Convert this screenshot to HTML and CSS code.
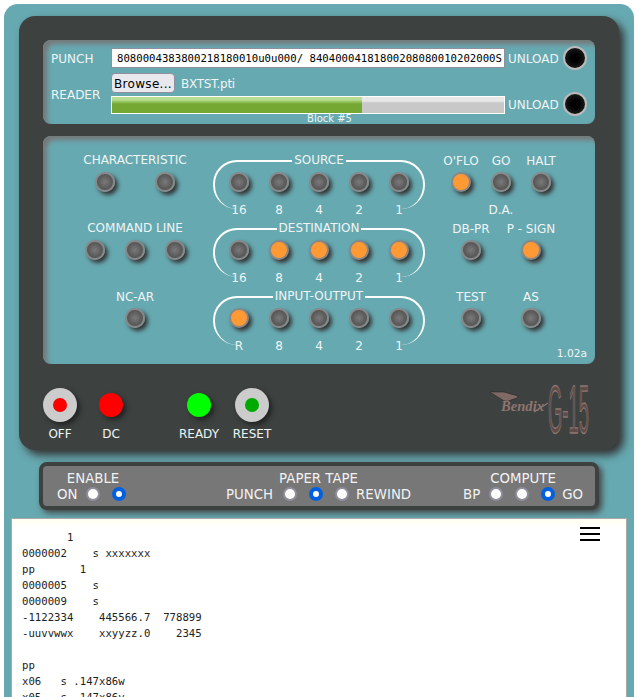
FILE: index.html
```html
<!DOCTYPE html>
<html lang="en">
<head>
    <meta charset="UTF-8">
    <title>Bendix G-15</title>
    <link rel="stylesheet" href="styles.css">
</head>
<body>
    <div class="cabinet">
        <div class="console">
            <div class="panel tape-panel">
                <div class="tape-row">
                    <span class="tape-label punch-label">PUNCH</span>
                    <div class="punch-box">8080004383800218180010u0u000/ 84040004181800208080010202000S</div>
                    <div class="unload"><span>UNLOAD</span><span class="unload-btn"></span></div>
                </div>
                <div class="tape-row reader-row">
                    <span class="tape-label reader-label">READER</span>
                    <div class="reader-mid">
                        <div class="file-row"><button class="browse">Browse...</button><span>BXTST.pti</span></div>
                        <div class="progress"><div class="progress-fill" style="width: 63.8%"></div></div>
                        <div class="block-label">Block #5</div>
                    </div>
                    <div class="unload unload-low"><span>UNLOAD</span><span class="unload-btn"></span></div>
                </div>
            </div>

            <div class="panel lamp-panel">
                <div class="col-left">
                    <div class="group">
                        <div class="title">CHARACTERISTIC</div>
                        <div class="lamps wide"><i class="lamp"></i><i class="lamp"></i></div>
                    </div>
                    <div class="group">
                        <div class="title">COMMAND LINE</div>
                        <div class="lamps"><i class="lamp"></i><i class="lamp"></i><i class="lamp"></i></div>
                    </div>
                    <div class="group">
                        <div class="title title-low">NC-AR</div>
                        <div class="lamps lamps-low"><i class="lamp"></i></div>
                    </div>
                </div>

                <div class="col-mid">
                    <div class="bank">
                        <div class="bank-title">SOURCE</div>
                        <div class="lamps"><i class="lamp"></i><i class="lamp"></i><i class="lamp"></i><i class="lamp"></i><i class="lamp"></i></div>
                        <div class="digits"><span>16</span><span>8</span><span>4</span><span>2</span><span>1</span></div>
                    </div>
                    <div class="bank">
                        <div class="bank-title">DESTINATION</div>
                        <div class="lamps"><i class="lamp"></i><i class="lamp on"></i><i class="lamp on"></i><i class="lamp on"></i><i class="lamp on"></i></div>
                        <div class="digits"><span>16</span><span>8</span><span>4</span><span>2</span><span>1</span></div>
                    </div>
                    <div class="bank">
                        <div class="bank-title">INPUT-OUTPUT</div>
                        <div class="lamps"><i class="lamp on"></i><i class="lamp"></i><i class="lamp"></i><i class="lamp"></i><i class="lamp"></i></div>
                        <div class="digits"><span>R</span><span>8</span><span>4</span><span>2</span><span>1</span></div>
                    </div>
                </div>

                <div class="col-right">
                    <div class="group">
                        <div class="cells">
                            <div class="cell"><div class="title">O'FLO</div><i class="lamp on"></i></div>
                            <div class="cell"><div class="title">GO</div><i class="lamp"></i></div>
                            <div class="cell"><div class="title">HALT</div><i class="lamp"></i></div>
                        </div>
                        <div class="da">D.A.</div>
                    </div>
                    <div class="group">
                        <div class="cells wide-cells">
                            <div class="cell"><div class="title">DB-PR</div><i class="lamp"></i></div>
                            <div class="cell"><div class="title">P - SIGN</div><i class="lamp on"></i></div>
                        </div>
                    </div>
                    <div class="group">
                        <div class="cells wide-cells">
                            <div class="cell"><div class="title">TEST</div><i class="lamp"></i></div>
                            <div class="cell"><div class="title">AS</div><i class="lamp"></i></div>
                        </div>
                    </div>
                </div>
                <div class="version">1.02a</div>
            </div>

            <div class="power-row">
                <div class="power off-cell"><span class="push"><i class="dot red"></i></span><div>OFF</div></div>
                <div class="power dc-cell"><span class="big-light red"></span><div>DC</div></div>
                <div class="power ready-cell"><span class="big-light green"></span><div>READY</div></div>
                <div class="power reset-cell"><span class="push"><i class="dot dark-green"></i></span><div>RESET</div></div>
                <svg class="logo" width="120" height="70" viewBox="0 0 120 70">
                    <path d="M10 17 Q10 18 13 19 L21 24 Q26 28 31 25 L37 23 L38 21 L24 17 Z" fill="#806a65" stroke="#262624" stroke-width="0.6"/>
                    <text x="21" y="36" class="logo-script" fill="#8d7570" textLength="43" lengthAdjust="spacingAndGlyphs">Bendix</text>
                    <path d="M54 37 L68 28" stroke="#8d7570" stroke-width="1.3" fill="none"/>
                    <text class="logo-big" transform="translate(68 58) scale(0.92 3.4)">G-15</text>
                </svg>
            </div>
        </div>

        <div class="switch-bar">
            <div class="switch-group enable">
                <div class="switch-title">ENABLE</div>
                <div class="switch-row"><span>ON</span><input type="radio" name="enable"><input type="radio" name="enable" checked></div>
            </div>
            <div class="switch-group tape">
                <div class="switch-title">PAPER TAPE</div>
                <div class="switch-row"><span>PUNCH</span><input type="radio" name="tape"><input type="radio" name="tape" checked><input type="radio" name="tape"><span class="after">REWIND</span></div>
            </div>
            <div class="switch-group compute">
                <div class="switch-title">COMPUTE</div>
                <div class="switch-row"><span>BP</span><input type="radio" name="compute"><input type="radio" name="compute"><input type="radio" name="compute" checked><span class="after">GO</span></div>
            </div>
        </div>

        <div class="paper">
            <div class="menu-icon"><i></i><i></i><i></i></div>
            <pre class="paper-text">       1
0000002    s xxxxxxx
pp       1
0000005    s
0000009    s
-1122334    445566.7  778899
-uuvvwwx    xxyyzz.0    2345

pp
x06   s .147x86w
x05   s .147x86v</pre>
        </div>
    </div>
</body>
</html>
```

FILE: styles.css
```css
html, body {
    margin: 0;
    height: 697px;
    overflow: hidden;
    background: #fff;
}
body {
    padding: 4px 4px 0;
    box-sizing: border-box;
    font-family: "DejaVu Sans", sans-serif;
    font-size: 12px;
    color: #eef5f5;
}
.cabinet {
    width: 630px;
    height: 720px;
    box-sizing: border-box;
    padding: 12px 15px;
    background: #67a9b1;
    border-radius: 14px;
}
.console {
    width: 600px;
    height: 434px;
    box-sizing: border-box;
    padding: 24px 24px 0;
    background: #3d4240;
    border-radius: 16px;
    box-shadow: 5px 5px 9px #333;
}
.panel {
    position: relative;
    background: #67a9b1;
    border-radius: 8px;
    box-shadow: inset 4px 4px 5px #777;
}

/* tape panel */
.tape-panel {
    height: 84px;
    box-sizing: border-box;
    padding: 6px 8px 0;
    margin-bottom: 12px;
}
.tape-row {
    display: flex;
    align-items: center;
}
.tape-label {
    width: 60px;
    line-height: 16px;
}
.punch-label {
    padding-top: 2px;
}
.punch-box {
    width: 394px;
    height: 20px;
    box-sizing: border-box;
    padding-left: 5px;
    border: 1px solid #8f8f9d;
    background: #fff;
    color: #000;
    font: 10.67px/19px "DejaVu Sans Mono", monospace;
    white-space: nowrap;
    overflow: hidden;
}
.unload {
    display: flex;
    align-items: center;
    justify-content: space-between;
    width: 79px;
    margin-left: 3px;
}
.unload span:first-child {
    padding-top: 2px;
}
.unload-btn {
    width: 24px;
    height: 24px;
    box-sizing: border-box;
    border: 2px solid #bbb;
    border-radius: 50%;
    background: radial-gradient(circle, #000 25%, #2a2a2a 100%);
}
.reader-row {
    align-items: flex-start;
    margin-top: 3px;
}
.reader-label {
    margin-top: 14px;
}
.reader-mid {
    width: 394px;
}
.file-row {
    display: flex;
    align-items: center;
    gap: 6px;
    height: 20px;
}
.file-row span {
    padding-top: 2px;
    letter-spacing: -0.3px;
}
.browse {
    width: 64px;
    height: 20px;
    padding: 1px 0 0;
    background: #e9e9ed;
    border: 1px solid #8f8f9d;
    border-radius: 4px;
    font: 12px "DejaVu Sans", sans-serif;
    letter-spacing: 0.3px;
    color: #000;
}
.progress {
    height: 18px;
    margin-top: 3px;
    box-sizing: border-box;
    border: 1px solid #fff;
    background: linear-gradient(#e8e8e8 0, #e8e8e8 4px, #c8c8c8 6px, #c8c8c8 100%);
}
.progress-fill {
    height: 100%;
    background: linear-gradient(#b8dc90 0, #b8dc90 3px, #92c05a 5px, #74a832 7px, #74a832 100%);
}
.block-label {
    padding-left: 43px;
    text-align: center;
    font-size: 10px;
    line-height: 9px;
}
.unload-low {
    margin-top: 19px;
}

/* lamp panel */
.lamp-panel {
    display: flex;
    height: 228px;
    box-sizing: border-box;
    padding-top: 16px;
}
.col-left {
    width: 156px;
    padding-left: 14px;
}
.col-mid {
    width: 212px;
    padding-top: 8px;
}
.col-right {
    width: 152px;
}
.group {
    height: 68px;
}
.title, .bank-title {
    line-height: 16px;
    text-align: center;
    white-space: nowrap;
}
.title-low {
    margin-top: 1px;
}
.lamps {
    display: flex;
    justify-content: center;
    gap: 20px;
    margin-top: 4px;
}
.lamps-low {
    margin-top: 3px;
}
.lamps.wide {
    gap: 40px;
}
.lamp {
    display: block;
    flex: none;
    width: 20px;
    height: 20px;
    box-sizing: border-box;
    border: 2px solid #888;
    border-radius: 50%;
    background: radial-gradient(circle, #7a7a7a 0, #444 100%);
    box-shadow: 3px 3px 4px #333;
}
.lamp.on {
    background: #ff9933;
}
.bank {
    display: flex;
    flex-direction: column;
    align-items: center;
    height: 49px;
    box-sizing: border-box;
    margin-bottom: 19px;
    border: 2px solid #fff;
    border-bottom: 0;
    border-radius: 24px;
}
.bank-title {
    margin-top: -10px;
    padding: 0 2px;
    background: #67a9b1;
}
.digits {
    display: flex;
    margin-top: 10px;
    line-height: 16px;
}
.digits span {
    width: 40px;
    text-align: center;
}
.cells {
    display: flex;
    justify-content: center;
}
.cell {
    display: flex;
    flex-direction: column;
    align-items: center;
    width: 40px;
    padding-top: 1px;
}
.cell .lamp {
    margin-top: 3px;
}
.wide-cells .cell {
    width: 60px;
}
.da {
    margin-top: 10px;
    line-height: 16px;
    text-align: center;
}
.version {
    position: absolute;
    right: 8px;
    bottom: 4px;
    font-size: 10.67px;
}

/* power buttons */
.power-row {
    display: flex;
    margin-left: -3px;
    padding-top: 24px;
}
.power {
    display: flex;
    flex-direction: column;
    align-items: center;
    width: 40px;
    line-height: 16px;
}
.power div {
    margin-top: 4px;
    white-space: nowrap;
}
.dc-cell {
    margin-left: 11px;
}
.ready-cell {
    margin-left: 48px;
}
.reset-cell {
    margin-left: 13px;
}
.push {
    display: flex;
    align-items: center;
    justify-content: center;
    width: 34px;
    height: 34px;
    border-radius: 50%;
    background: #ccc;
    box-shadow: 3px 3px 5px #222;
}
.dot {
    width: 14px;
    height: 14px;
    border-radius: 50%;
}
.big-light {
    width: 24px;
    height: 24px;
    margin: 5px 0;
    border-radius: 50%;
    box-shadow: 3px 3px 5px #222;
}
.red {
    background: #f00;
}
.green {
    background: #0f0;
}
.dark-green {
    background: #0a0;
}
.logo {
    margin: -13px -5px 0 auto;
    overflow: visible;
}
.logo-script {
    font: italic bold 15px "Liberation Serif", serif;
}
.logo-big {
    font: 20px "Liberation Sans", sans-serif;
    fill: #5f4c49;
    stroke: #8d7570;
    stroke-width: 1px;
    vector-effect: non-scaling-stroke;
}

/* switches */
.switch-bar {
    display: flex;
    width: 560px;
    height: 48px;
    box-sizing: border-box;
    margin: 12px 0 8px 20px;
    padding-top: 5px;
    border: 4px solid #3d4240;
    border-radius: 8px;
    background: #777;
    box-shadow: 3px 3px 6px #444;
    font-size: 13.33px;
    color: #f2f2f2;
}
.switch-title {
    line-height: 16px;
    text-align: center;
    white-space: nowrap;
}
.switch-row {
    display: flex;
    align-items: center;
    height: 14px;
}
.switch-row span {
    margin-right: 2px;
    line-height: 13px;
}
.switch-row span.after {
    margin: 0 0 0 7px;
}
.switch-row input {
    appearance: none;
    width: 14px;
    height: 14px;
    box-sizing: border-box;
    margin: 0 0 0 7px;
    border: 2px solid #8f8f9d;
    border-radius: 50%;
    background: #fff;
}
.switch-row input + input {
    margin-left: 12px;
}
.switch-row input:checked {
    border: 4px solid #0060df;
}
.enable {
    width: 72px;
    margin-left: 14px;
}
.tape {
    margin-left: 97px;
}
.tape .switch-row span:first-child {
    margin-right: 3px;
}
.compute {
    margin-left: auto;
    margin-right: 12px;
}

/* printer paper */
.paper {
    position: relative;
    width: 616px;
    height: 200px;
    box-sizing: border-box;
    margin-left: -8px;
    border: 1px solid #aaa;
    background: linear-gradient(#fffff0 0, #fffff6 4px, #fff 10px);
}
.menu-icon {
    position: absolute;
    top: 8px;
    right: 26px;
    width: 20px;
}
.menu-icon i {
    display: block;
    height: 2px;
    margin-bottom: 4px;
    background: #000;
}
.paper-text {
    margin: 11px 0 0 10px;
    font: 10.67px/16px "DejaVu Sans Mono", monospace;
    color: #222;
}
```
